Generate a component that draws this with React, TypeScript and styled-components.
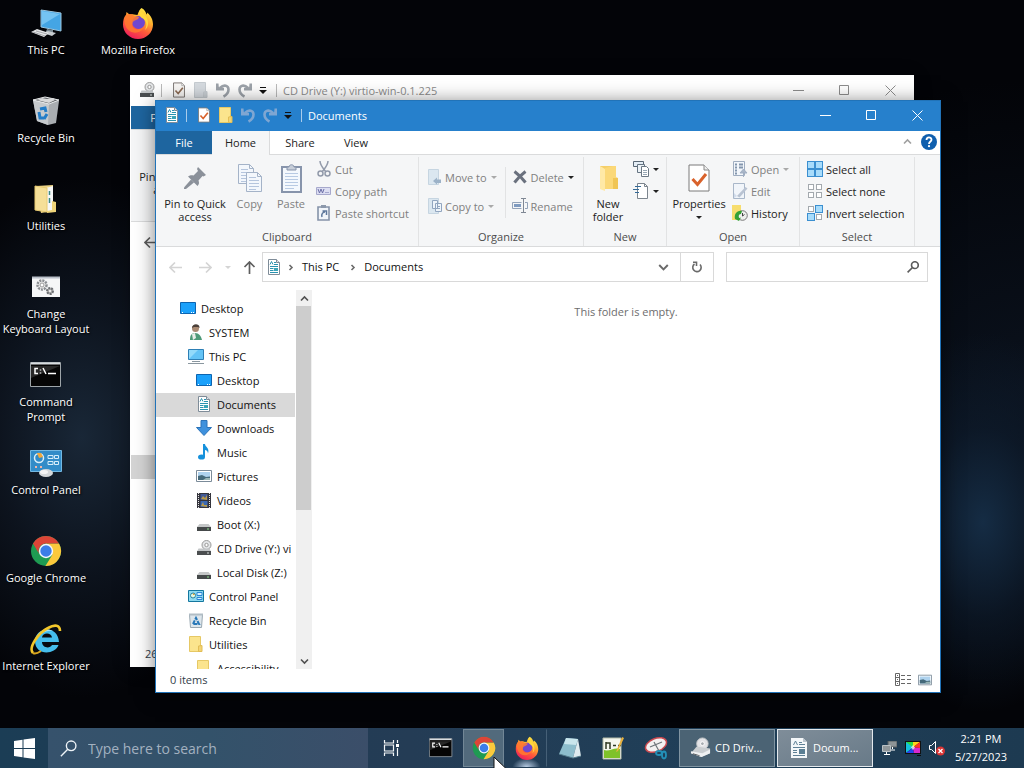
import React from "react";
import styled, { createGlobalStyle } from "styled-components";

const GlobalStyle = createGlobalStyle`
  * { box-sizing: border-box; }
  body { margin: 0; background: #030409; }
  body, button, input {
    font-family: "Open Sans", "Noto Sans", sans-serif;
    font-size: 11px;
  }
  button { border: 0; padding: 0; background: none; color: inherit; }
  svg { display: block; flex: none; }
  ul { list-style: none; margin: 0; padding: 0; }
`;

/* ---------- desktop ---------- */

const Screen = styled.div`
  min-height: 100vh;
  display: flex;
  flex-direction: column;
  background:
    radial-gradient(ellipse 120px 190px at 96% 68%, #152c44 0%, rgba(15, 30, 48, 0.6) 50%, transparent 100%),
    radial-gradient(ellipse 170px 260px at 8% 57%, #192737 0%, rgba(17, 26, 39, 0.7) 50%, transparent 100%),
    radial-gradient(ellipse 400px 380px at 100% 50%, #0a111c 0%, transparent 80%),
    #030408;
`;

const Workspace = styled.main`
  position: relative;
  flex: 1;
  display: flex;
  overflow: hidden;
`;

const ShortcutColumn = styled.ul`
  display: grid;
  grid-auto-rows: 88px;
  align-content: start;
  width: 92px;
`;

const Shortcut = styled.button`
  width: 100%;
  padding-top: 7px;
  display: flex;
  flex-direction: column;
  align-items: center;
  gap: 3px;
  color: #fff;
  line-height: 15px;
  text-align: center;
  text-shadow: 1px 1px 2px #000;
`;

const ShortcutLabel = styled.span`
  width: 92px;
  white-space: pre-line;
`;

/* ---------- explorer windows ---------- */

const Frame = styled.section<{ $active?: boolean }>`
  position: absolute;
  top: ${(p) => (p.$active ? 100 : 75)}px;
  left: ${(p) => (p.$active ? 155 : 130)}px;
  right: ${(p) => (p.$active ? 83 : 110)}px;
  bottom: ${(p) => (p.$active ? 35 : 61)}px;
  display: flex;
  flex-direction: column;
  background: #fff;
  color: #1b1b1b;
  border: 1px solid ${(p) => (p.$active ? "#2173b8" : "#fff")};
  box-shadow: 0 2px 18px rgba(0, 0, 0, ${(p) => (p.$active ? 0.5 : 0.2)});
`;

const TitleBar = styled.header<{ $active?: boolean }>`
  height: 30px;
  flex: none;
  display: flex;
  align-items: center;
  padding: 0 0 2px 8px;
  background: ${(p) => (p.$active ? "#2680cc" : "#fff")};
  color: ${(p) => (p.$active ? "#fff" : "#8c8c8c")};
`;

const QuickBar = styled.div`
  display: flex;
  align-items: center;
`;

const QuickButton = styled.button<{ $narrow?: boolean }>`
  width: ${(p) => (p.$narrow ? 14 : 22)}px;
  height: 20px;
  display: grid;
  place-items: center;
`;

const WindowIcon = styled.span`
  width: 16px;
  display: grid;
  place-items: center;
`;

const Rule = styled.span`
  width: 1px;
  height: 13px;
  margin: 0 6px;
  background: currentColor;
  opacity: 0.6;
`;

const Title = styled.h1`
  flex: 1;
  margin: 0;
  font-size: 11px;
  font-weight: 400;
`;

const Caption = styled.button`
  width: 46px;
  height: 28px;
  display: grid;
  place-items: center;
`;

const Tabs = styled.nav`
  height: 24px;
  flex: none;
  display: flex;
  border-bottom: 1px solid #dadbdc;
`;

const Tab = styled.button<{ $w: number; $kind?: "file" | "open" }>`
  width: ${(p) => p.$w}px;
  height: ${(p) => (p.$kind === "open" ? 24 : 23)}px;
  padding-bottom: ${(p) => (p.$kind === "open" ? 2 : 0)}px;
  color: ${(p) => (p.$kind === "file" ? "#fff" : "#222")};
  background: ${(p) => (p.$kind === "file" ? "#1e659f" : p.$kind === "open" ? "#f5f6f7" : "none")};
  border-right: ${(p) => (p.$kind === "open" ? "1px solid #dadbdc" : "0")};
`;

const TabEnd = styled.div`
  margin-left: auto;
  display: flex;
  align-items: center;
  gap: 9px;
  padding: 0 3px 2px 0;
`;

const Ribbon = styled.div`
  height: 92px;
  flex: none;
  display: flex;
  background: #f5f6f7;
  border-bottom: 1px solid #dadbdc;
`;

const GroupBox = styled.section<{ $w: number }>`
  width: ${(p) => p.$w}px;
  flex: none;
  display: flex;
  flex-direction: column;
  border-right: 1px solid #e2e3e4;
  margin-top: 2px;
`;

const GroupBody = styled.div<{ $pad: number }>`
  flex: 1;
  display: flex;
  padding: 2px 0 0 ${(p) => p.$pad}px;
`;

const GroupName = styled.h2`
  margin: 0;
  height: 17px;
  font-size: 11px;
  font-weight: 400;
  line-height: 15px;
  text-align: center;
  color: #4c4c4c;
`;

const BigButton = styled.button<{ $w: number; $off?: boolean }>`
  width: ${(p) => p.$w}px;
  padding-top: 3px;
  display: flex;
  flex-direction: column;
  align-items: center;
  align-self: flex-start;
  gap: 3px;
  line-height: 13px;
  color: ${(p) => (p.$off ? "#808080" : "#222")};
`;

const IconSlot = styled.span`
  height: 32px;
  display: grid;
  place-items: center;
`;

const Stack = styled.div<{ $loose?: boolean; $left?: number; $ruled?: boolean }>`
  display: flex;
  flex-direction: column;
  align-items: flex-start;
  align-self: flex-start;
  gap: ${(p) => (p.$loose ? 7 : 0)}px;
  margin-top: ${(p) => (p.$loose ? 8 : 0)}px;
  margin-left: ${(p) => p.$left ?? 0}px;
  padding-right: ${(p) => (p.$ruled ? 7 : 0)}px;
  border-right: ${(p) => (p.$ruled ? "1px solid #e2e3e4" : "0")};
`;

const SmallButton = styled.button<{ $off?: boolean }>`
  height: 22px;
  padding-bottom: 2px;
  display: flex;
  align-items: center;
  gap: 3px;
  white-space: nowrap;
  color: ${(p) => (p.$off ? "#808080" : "#222")};
`;

const RibbonIcon = styled.span`
  width: 16px;
  display: grid;
  place-items: center;
`;

const NavRow = styled.div`
  height: 43px;
  flex: none;
  display: flex;
  padding: 5px 12px 8px 4px;
`;

const NavButtons = styled.div`
  display: flex;
  align-items: center;
  color: #d4d4d4;
`;

const NavButton = styled.button<{ $w: number; $on?: boolean }>`
  width: ${(p) => p.$w}px;
  height: 100%;
  display: grid;
  place-items: center;
  color: ${(p) => (p.$on ? "#5e5e5e" : "inherit")};
`;

const Address = styled.div`
  flex: 1;
  display: flex;
  align-items: center;
  border: 1px solid #d9d9d9;
  padding-left: 4px;
`;

const Crumbs = styled.div`
  flex: 1;
  display: flex;
  align-items: center;
  padding-left: 5px;
`;

const Crumb = styled.button`
  margin: 0 9px 0 7px;
  padding-bottom: 2px;
  color: #111;
`;

const AddressTool = styled.button<{ $ruled?: boolean }>`
  width: 33px;
  height: 100%;
  display: grid;
  place-items: center;
  border-left: ${(p) => (p.$ruled ? "1px solid #d9d9d9" : "0")};
`;

const SearchBox = styled.label`
  width: 202px;
  margin-left: 12px;
  display: flex;
  align-items: center;
  border: 1px solid #d9d9d9;
  padding-right: 8px;
`;

const SearchInput = styled.input`
  flex: 1;
  min-width: 0;
  border: 0;
  outline: 0;
  background: none;
`;

const Body = styled.div`
  flex: 1;
  min-height: 0;
  display: flex;
`;

const Tree = styled.ul`
  width: 140px;
  flex: none;
  padding-top: 7px;
  overflow: hidden;
`;

const TreeRow = styled.button<{ $level: number; $selected?: boolean }>`
  width: 139px;
  height: 24px;
  padding: 0 0 2px ${(p) => 24 + p.$level * 8}px;
  display: flex;
  align-items: center;
  gap: 5px;
  white-space: nowrap;
  color: #111;
  background: ${(p) => (p.$selected ? "#d9d9d9" : "none")};
`;

const TreeIcon = styled.span`
  width: 16px;
  flex: none;
  display: grid;
  place-items: center;
`;

const Scrollbar = styled.div`
  width: 16px;
  flex: none;
  display: flex;
  flex-direction: column;
  background: #f0f0f0;
`;

const ScrollButton = styled.button`
  height: 16px;
  display: grid;
  place-items: center;
`;

const Thumb = styled.div`
  flex: 204;
  background: #cdcdcd;
  margin-right: 1px;
`;

const ThumbRest = styled.div`
  flex: 143;
`;

const Content = styled.div`
  flex: 1;
  padding-top: 14px;
  line-height: 15px;
  text-align: center;
  color: #6d6d6d;
`;

const Status = styled.footer`
  height: 23px;
  flex: none;
  display: flex;
  align-items: center;
  gap: 7px;
  padding: 0 8px 2px 14px;
  color: #333d49;
`;

const StatusText = styled.span`
  flex: 1;
`;

const BackBody = styled.div`
  flex: 1;
  padding-top: 190px;
`;

const BackSelection = styled.div`
  width: 139px;
  height: 24px;
  background: #d4d4d4;
`;

/* ---------- taskbar ---------- */

const BarWrap = styled.div`
  position: relative;
`;

const Taskbar = styled.footer`
  height: 40px;
  flex: none;
  display: flex;
  align-items: stretch;
  background: linear-gradient(90deg, #1b3d55, #243c55 40%, #1f3f58 70%, #1d3a51);
  color: #fff;
`;

const Start = styled.button`
  width: 48px;
  display: grid;
  place-items: center;
`;

const TaskSearch = styled.label`
  width: 320px;
  display: flex;
  align-items: center;
  gap: 9px;
  padding-left: 12px;
  background: linear-gradient(90deg, #36526c, #33526a 50%, #3b4e69);
`;

const TaskSearchInput = styled.input`
  flex: 1;
  min-width: 0;
  border: 0;
  outline: 0;
  background: none;
  font-size: 14px;
  &::placeholder { color: #a3b1c0; opacity: 1; }
`;

const Pins = styled.div`
  display: flex;
  padding-right: 2px;
`;

const TaskViewButton = styled.button`
  width: 46px;
  margin-right: 5px;
  display: grid;
  place-items: center;
`;

const Pin = styled.button<{ $hot?: boolean; $running?: boolean }>`
  width: 41px;
  margin: 1px;
  display: grid;
  place-items: center;
  border: 1px solid ${(p) => (p.$hot ? "#728796" : "transparent")};
  border-right-color: ${(p) => (p.$hot ? "#728796" : p.$running ? "#466077" : "transparent")};
  background: ${(p) =>
    p.$hot ? "#526a7c" : p.$running ? "radial-gradient(ellipse 14px 9px at 50% 100%, #b9cde4, transparent) border-box" : "none"};
`;

const Task = styled.button<{ $active?: boolean }>`
  width: 96px;
  margin: 1px 2px 1px 0;
  padding: 0 0 1px 10px;
  display: flex;
  align-items: center;
  gap: 4px;
  text-align: left;
  color: #fff;
  border: 1px solid ${(p) => (p.$active ? "#e4e9ed" : "#8195a2")};
  background: ${(p) => (p.$active ? "linear-gradient(160deg, #7f8d99, #687a88)" : "#4b6374")};
`;

const TaskIcon = styled.span`
  width: 21px;
  display: grid;
  place-items: center;
`;

const Tray = styled.div`
  flex: 1;
  display: flex;
  align-items: center;
  justify-content: space-between;
  padding: 0 17px 0 7px;
`;

const TrayIcons = styled.div`
  display: flex;
  align-items: center;
  gap: 8px;
`;

const Clock = styled.time`
  line-height: 18px;
  text-align: center;
`;

const Pointer = styled.div`
  position: absolute;
  left: 493px;
  bottom: -9px;
`;

/* ---------- icons ---------- */

const DocIcon = ({ w = 14, h = 16 }: { w?: number; h?: number }) => (
  <svg width={w} height={h} viewBox="0 0 14 16">
    <path d="M1.5.5h8l3 3v12h-11z" fill="#fff" stroke="#7f8c98" />
    <path d="M9.500.5v3h3" fill="#dfe6ec" stroke="#7f8c98" />
    <path d="M3 5.500l1.500-3L6 5.500M7 3.500h2M7 5.500h4M3 7.500h8M3 9.500h3.500M3 11.500h3.500M3 13.500h8" stroke="#2a93b0" fill="none" />
    <rect x="7" y="9" width="4" height="3" fill="#3ba5b8" />
  </svg>
);

const TaskDocIcon = () => (
  <svg width="16" height="20" viewBox="0 0 16 20">
    <path d="M0 0h12l4 4v16H0z" fill="#f4f7f9" /><path d="M12 0v4h4z" fill="#b9c4cd" />
    <path d="M2.500 7l2-4 2 4M8 4.500h3M8 6.500h6M2 9.500h12M2 12.500h4M2 14.500h4M2 17.500h12" fill="none" stroke="#5f8196" />
    <path d="M8 11h6v5H8z" fill="#5b7f94" />
  </svg>
);

const CheckDoc = ({ big, dim }: { big?: boolean; dim?: boolean }) => (
  <svg width={big ? 22 : 12} height={big ? 28 : 16} viewBox="0 0 22 28">
    <path d="M1 1h15l5 5v21H1z" fill={dim ? "#f8f6f4" : "#fff"} stroke={dim ? "#716a66" : "#7b7b7b"} strokeWidth={big ? 1 : 1.6} />
    <path d="M16 1v5h5" fill="#eee" stroke="#8a8a8a" />
    <path d="M4.500 15l5 5.500L18 10" fill="none" stroke={dim ? "#8b6a53" : "#d9622b"} strokeWidth="3" />
  </svg>
);

const FolderSmall = ({ dim }: { dim?: boolean }) => (
  <svg width="14" height="16" viewBox="0 0 14 16">
    <path d="M.5.5h11v15H.5z" fill={dim ? "#d6dbe0" : "#fbe48d"} stroke={dim ? "#c6ccd1" : "#e6c865"} />
    <path d="M9.500 15.500V10l3.500-.5v6z" fill={dim ? "#cbd1d6" : "#f3d474"} stroke={dim ? "#c6ccd1" : "#e2bd55"} />
  </svg>
);

const Turn = ({ flip, dim }: { flip?: boolean; dim?: boolean }) => (
  <svg width="16" height="16" viewBox="0 0 16 16">
    <g transform={flip ? "matrix(-1 0 0 1 16 0)" : undefined}>
      <path d="M5 6c4-4 8.500-2.500 8.500 1.500 0 3-2 5.500-5 7" fill="none" stroke={dim ? "#9da3aa" : "#7fa6d2"} strokeWidth="2.600" />
      <path d="M1 1.500h2.500l.3 3.500L9 6v2.500H1z" fill={dim ? "#9da3aa" : "#7fa6d2"} />
    </g>
  </svg>
);

const Caret = ({ color = "#222", bar }: { color?: string; bar?: boolean }) => (
  <svg width="8" height="8" viewBox="0 0 8 8">
    {bar && <path d="M1 1.500h6" stroke={color} />}
    <path d={bar ? "M0 4h8L4 8z" : "M1 3h6L4 6z"} fill={color} />
  </svg>
);

const CdDrive = () => (
  <svg width="16" height="16" viewBox="0 0 16 16">
    <circle cx="10.500" cy="5" r="4.500" fill="#e4e6e8" stroke="#9a9a9a" />
    <circle cx="10.500" cy="5" r="1.700" fill="#fff" stroke="#999" />
    <path d="M2.500 8.500h11l1.500 3H1z" fill="#c3c6c8" />
    <path d="M1 11h14v4H1z" fill="#4b4e50" />
    <path d="M11 13h2" stroke="#d8dedc" />
  </svg>
);

const CdTask = () => (
  <svg width="21" height="21" viewBox="0 0 22 22">
    <circle cx="13" cy="7" r="6" fill="#e3e3e6" stroke="#c4c7ca" />
    <circle cx="13" cy="7" r="2" fill="#a9adb2" stroke="#fff" />
    <path d="M7 10l14 2v5l-9 4-11-4z" fill="#c9cdd0" />
    <path d="M1 15l12 2 8-4v4l-9 4-11-4z" fill="#eff1f2" />
    <path d="M3 17l7 2v1l-7-2z" fill="#4c5053" />
  </svg>
);

const Disk = () => (
  <svg width="16" height="16" viewBox="0 0 16 16">
    <path d="M3.500 8h9l2.500 3H1z" fill="#c5c7c8" />
    <path d="M1 11h14v4H1z" fill="#45494a" />
    <path d="M11 13h2" stroke="#8ee08c" />
  </svg>
);

const CaptionGlyph = ({ kind }: { kind: "min" | "max" | "close" }) => (
  <svg width="11" height="11" viewBox="0 0 11 11" fill="none" stroke="currentColor">
    {kind === "min" && <path d="M0 5.500h11" />}
    {kind === "max" && <path d="M.5.5h9v9H.5z" />}
    {kind === "close" && <path d="M.5.5l10 10M10.500.5l-10 10" />}
  </svg>
);

const PinIcon = () => (
  <svg width="22" height="22" viewBox="0 0 22 22" fill="#8b919a">
    <path d="M14 0l8 8-2.500 1.500-1-.5-4 4.500c1 2.500.5 4-1 5.500L4 9.500C6 8 8 8 9.500 8.500L14 4l-1-2z" />
    <path d="M7 12.500l3 3L2 22H0v-1.500z" />
  </svg>
);

const Sheet = ({ x, y }: { x: number; y: number }) => (
  <g transform={`translate(${x} ${y})`}>
    <path d="M.5.5h11l4 4v15H.5z" fill="#f3f7fc" stroke="#a4b3c8" />
    <path d="M11.500.5v4h4" fill="none" stroke="#a4b3c8" />
    <path d="M3 5.500h7M3 8.500h10M3 11.500h10M3 14.500h10M3 17.500h7" stroke="#b5c5dd" />
  </g>
);

const CopyIcon = () => (
  <svg width="24" height="28" viewBox="0 0 24 28"><Sheet x={0} y={0} /><Sheet x={8} y={8} /></svg>
);

const PasteIcon = () => (
  <svg width="21" height="29" viewBox="0 0 21 29">
    <rect x="1" y="3" width="19" height="25" fill="#f4f8fd" stroke="#8794ab" strokeWidth="2" />
    <path d="M6 6V3h2c0-3 5-3 5 0h2v3z" fill="#c7ced9" stroke="#8794ab" />
    <path d="M4 9.500h13M4 12.500h13M4 15.500h13M4 18.500h13M4 21.500h13M4 24.500h9" stroke="#b8cae3" />
  </svg>
);

const CutIcon = () => (
  <svg width="16" height="16" viewBox="0 0 16 16" fill="none" stroke="#929aaa" strokeWidth="1.500">
    <path d="M4 0c0 4 2 6 6 11M12 0c0 4-2 6-6 11" />
    <circle cx="4.500" cy="12.500" r="2.500" /><circle cx="11.500" cy="12.500" r="2.500" />
  </svg>
);

const PathIcon = () => (
  <svg width="16" height="16" viewBox="0 0 16 16">
    <path d="M.5 4.500h14v7H.5z" fill="#dcdef2" stroke="#a7a9cc" />
    <path d="M2 6l1.500 4L5 6l1.500 4L8 6M9.500 9.500h1M11.500 9.500h1" fill="none" stroke="#6d70a8" />
  </svg>
);

const ShortcutIcon = () => (
  <svg width="16" height="16" viewBox="0 0 16 16">
    <path d="M2 2h11v13H2z" fill="#f1f5fa" stroke="#8593a9" strokeWidth="1.600" />
    <path d="M5 0h5v3H5z" fill="#8b98ab" />
    <path d="M6 12c-1-3 1-5 3-5M6.500 6h4v4" fill="none" stroke="#5d779c" strokeWidth="1.500" />
  </svg>
);

const MoveIcon = ({ copy }: { copy?: boolean }) => (
  <svg width="14" height="16" viewBox="0 0 14 16">
    <path d="M.5.5h10v15H.5z" fill="#dbe7f0" stroke="#c6d5e1" />
    {copy
      ? <path d="M4.500 2.500h5v8h-5zM7.500 5.500h6v8h-6zM9 8.500h3M9 10.500h3" fill="#eef4fa" stroke="#91a5bf" />
      : <path d="M5 12l4-3.500v2h4V14H9v1.500z" fill="#9cb2c8" />}
  </svg>
);

const DeleteIcon = () => (
  <svg width="14" height="14" viewBox="0 0 14 14"><path d="M1.500 1.500c4 3 8 7 11 11M12.500 1.500c-4 3-8 7-11 11" stroke="#6a717e" strokeWidth="3" /></svg>
);

const RenameIcon = () => (
  <svg width="16" height="16" viewBox="0 0 16 16" fill="none" stroke="#93a3b9">
    <path d="M9.500 4.500h-9v6h9M13 4.500h2.500v6H13" /><path d="M2 7.500h7" stroke="#7f9bc0" strokeWidth="3" />
    <path d="M9 .5h5M11.500.5v14M9 14.500h5" stroke="#7f8794" />
  </svg>
);

const FolderBig = () => (
  <svg width="19" height="28" viewBox="0 0 19 28">
    <path d="M1 2h16v23H1z" fill="#f5cf69" /><path d="M1 2l5 3v22l-5-2z" fill="#ffe9a6" />
    <path d="M6 4l8-2h3v11l2 1v11H6z" fill="#fbd878" /><path d="M14 14h5v11h-5z" fill="#f0c555" />
  </svg>
);

const NewItemIcon = () => (
  <svg width="16" height="16" viewBox="0 0 16 16">
    <path d="M.5.5h10v5H.5z" fill="#e4edf5" stroke="#596775" />
    <path d="M4.500 3.500h7v8h-7z" fill="#edf3f7" stroke="#667482" />
    <path d="M8.500 5.500h5l2 2v8h-7z" fill="#fff" stroke="#6c7884" /><path d="M10 9.500h4M10 11.500h4M10 13.500h4" stroke="#98a7b4" />
  </svg>
);

const EasyIcon = () => (
  <svg width="16" height="16" viewBox="0 0 16 16">
    <path d="M4.500.5h7l3 3v12h-10z" fill="#fff" stroke="#7c858e" /><path d="M11.500.5v3h3" fill="none" stroke="#7c858e" />
    <path d="M2 3.500h6M0 6.500h6M2 9.500h4" stroke="#356b98" />
  </svg>
);

const OpenIcon = () => (
  <svg width="16" height="16" viewBox="0 0 16 16">
    <path d="M1.500.5h11v14h-11z" fill="#f2f6fb" stroke="#9fadc0" />
    <path d="M3 3.500h2M7 3.500h4M3 6.500h2M7 6.500h4M3 9.500h2M3 12.500h2" stroke="#8396ad" strokeWidth="2" />
    <path d="M11.500 16v-5M8 12l3.500-4 3.500 4z" fill="#a9b6c8" stroke="#a1afc3" />
  </svg>
);

const EditIcon = () => (
  <svg width="16" height="16" viewBox="0 0 16 16">
    <path d="M1.500.5h11v15h-11z" fill="#f1f5fa" stroke="#a9b7c9" /><path d="M5 13l8.500-9 2 1.500-8 9z" fill="#b9c3d2" /><path d="M2 10l3 3-3 2z" fill="#d1dceb" />
  </svg>
);

const HistoryIcon = () => (
  <svg width="16" height="16" viewBox="0 0 16 16">
    <path d="M0 0h9v15H0z" fill="#f7dd6e" />
    <circle cx="10.500" cy="10.500" r="4.800" fill="#eef0ee" stroke="#777" />
    <path d="M10.500 8v3l2-1.500" fill="none" stroke="#444" />
    <path d="M3 14c-1-5 2-9 7-8l-1 3c-2 0-3 2-2 4l2-.5-2 3.500z" fill="#35a136" />
  </svg>
);

const SelectIcon = ({ mode }: { mode: "all" | "none" | "invert" }) => {
  const cells = [[0, 0], [8, 0], [0, 8], [8, 8]];
  return (
    <svg width="16" height="16" viewBox="0 0 16 16">
      {cells.map(([x, y], i) => {
        const on = mode === "all" || (mode === "invert" && (i === 1 || i === 2));
        return on
          ? <rect key={i} x={x + 0.5} y={y + 0.5} width="7" height="7" fill="#a8dcfb" stroke="#3b8fd0" />
          : <rect key={i} x={x + 1.5} y={y + 1.5} width="5" height="5" fill="#fff" stroke="#a3a9ae" />;
      })}
    </svg>
  );
};

const Arrow = ({ dir }: { dir: "left" | "right" | "up" }) => (
  <svg width="13" height="13" viewBox="0 0 13 13" fill="none" stroke="currentColor" strokeWidth="1.700">
    {dir === "left" && <path d="M13 6.500H1M6 1.500l-5 5 5 5" />}
    {dir === "right" && <path d="M0 6.500h12M7 1.500l5 5-5 5" />}
    {dir === "up" && <path d="M6.500 13V1M1.500 6l5-5 5 5" />}
  </svg>
);

const Angle = ({ dir, color = "#6a6a6a", size = 9 }: { dir: "up" | "down" | "right"; color?: string; size?: number }) => (
  <svg width={size} height={size} viewBox="0 0 9 9" fill="none" stroke={color} strokeWidth="1.600">
    {dir === "up" && <path d="M1 6.500L4.500 3 8 6.500" />}
    {dir === "down" && <path d="M1 2.500L4.500 6 8 2.500" />}
    {dir === "right" && <path d="M3.500 2L6 4.500 3.500 7" />}
  </svg>
);

const RefreshIcon = () => (
  <svg width="12" height="12" viewBox="0 0 12 12" fill="none" stroke="#6a6a6a" strokeWidth="1.600">
    <path d="M3.500 3a4.200 4.200 0 1 0 5.500.5" /><path d="M2 1.200h3.500V5" />
  </svg>
);

const Lens = ({ size, color, width }: { size: number; color: string; width: number }) => (
  <svg width={size} height={size} viewBox="0 0 16 16" fill="none" stroke={color} strokeWidth={width}>
    <circle cx="10.500" cy="5.500" r="4.500" /><path d="M7.300 8.700L.8 15.200" />
  </svg>
);

const HelpIcon = () => (
  <svg width="16" height="16" viewBox="0 0 16 16">
    <circle cx="8" cy="8" r="8" fill="#0f5fae" />
    <path d="M5.500 6c0-3.500 5-3.300 5-.3C10.500 7.500 8 7.500 8 10" fill="none" stroke="#fff" strokeWidth="1.800" />
    <circle cx="8" cy="12.200" r="1.100" fill="#fff" />
  </svg>
);

const DesktopIcon = () => (
  <svg width="16" height="16" viewBox="0 0 16 16">
    <path d="M.5 2.500h15v11H.5z" fill="#1ba1fb" stroke="#0d64b0" /><path d="M2 12.500h1M11 12.500h1M13 12.500h1" stroke="#fff" />
  </svg>
);

const UserIcon = () => (
  <svg width="16" height="16" viewBox="0 0 16 16">
    <path d="M2 16c0-4 1-7 5-7s6 3 7 7z" fill="#4e9a78" /><path d="M4 10l3-1 1 5-3 2z" fill="#e9eee9" />
    <circle cx="7.500" cy="4.500" r="3.500" fill="#a98a72" /><path d="M4 4c0-5 8-5 7.500 0L10 3H6z" fill="#4b4039" />
  </svg>
);

const PcIcon = () => (
  <svg width="16" height="16" viewBox="0 0 16 16">
    <path d="M.5 1.500h15v10H.5z" fill="#63c3f6" stroke="#2d7fb5" /><path d="M1 11V2h9z" fill="#93dafa" />
    <path d="M4 13.500h8M0 15.500h16" stroke="#8a979f" />
  </svg>
);

const DownIcon = () => (
  <svg width="16" height="16" viewBox="0 0 16 16"><path d="M5 .5h6v7h4.500L8 15.500.5 7.500H5z" fill="#3e91dd" stroke="#2b73b9" /></svg>
);

const MusicIcon = () => (
  <svg width="16" height="16" viewBox="0 0 16 16">
    <ellipse cx="5.500" cy="13" rx="3.500" ry="2.600" fill="#1691dc" />
    <path d="M7 0h2c0 3 5 4 3 9.500C12 7 10 6 9 6v7H7z" fill="#1691dc" />
  </svg>
);

const PictureIcon = ({ w = 16, h = 16 }: { w?: number; h?: number }) => (
  <svg width={w} height={h} viewBox="0 0 16 16">
    <path d="M.5 2.500h15v11H.5z" fill="#fff" stroke="#7b8b99" /><path d="M2 4h12v8H2z" fill="#aed2ee" />
    <path d="M2 8l4-1 4 2 4-.5V12H2z" fill="#44697a" /><path d="M7 12l3-2 4 0v2z" fill="#9bb6b6" />
  </svg>
);

const VideoIcon = () => (
  <svg width="16" height="16" viewBox="0 0 16 16">
    <path d="M1 1h14v15H1z" fill="#34343c" />
    <path d="M2.500 1v15M13.500 1v15" stroke="#e7e7e7" strokeDasharray="1 1" />
    <path d="M4.500 2h7v6h-7z" fill="#425a96" /><path d="M4.500 9h7v6h-7z" fill="#3b69b3" />
    <path d="M5 7l2-3 2 2 2-3v5zM5 14l2-4 1 3h3v2z" fill="#b99a4b" />
  </svg>
);

const PanelIcon = () => (
  <svg width="16" height="16" viewBox="0 0 16 16">
    <path d="M.5 2.500h15v11H.5z" fill="#8edaf0" stroke="#14779f" />
    <circle cx="5" cy="7.500" r="2.500" fill="#e5f7de" stroke="#2783a4" /><path d="M9 4.500h5v3H9zM9 9.500h5v2H9z" fill="#d4f0ff" stroke="#2c86d5" />
    <path d="M5 7V5l2 2z" fill="#e69b28" />
  </svg>
);

const BinSmall = () => (
  <svg width="16" height="16" viewBox="0 0 16 16">
    <path d="M1.500 2.500h13l-1 13h-11z" fill="#dde6ec" stroke="#9ba9b2" /><path d="M1 2.500h14" stroke="#b1bdc5" strokeWidth="2" />
    <path d="M5 12l3-6 3 6z" fill="none" stroke="#2878b8" strokeWidth="2" strokeDasharray="4 1" />
  </svg>
);

const BigPc = () => (
  <svg width="32" height="32" viewBox="0 0 32 32">
    <path d="M11 3l20 3v18l-20-4z" fill="#44a5e4" stroke="#9cc6df" /><path d="M12 4l18 3-18 11z" fill="#74c3f2" />
    <path d="M17 22l6 1v4h-8z" fill="#7a8992" /><path d="M13 26l5-2 8 2-4 3z" fill="#c7ccd0" />
    <path d="M1 25l6-3 12 4-5 4z" fill="#e4e5e7" /><path d="M3 25l12 4M6 24l11 3" stroke="#a6a9ad" />
  </svg>
);

const BigBin = () => (
  <svg width="32" height="32" viewBox="0 0 32 32">
    <path d="M3 5l20-2 6 3-3 22-8 2-11-4z" fill="#a9adb1" /><path d="M3 5l16 3-1 22-11-4z" fill="#c6cacd" />
    <path d="M3 5l12-3 14 3-10 4z" fill="#5d6165" stroke="#eceeef" /><path d="M7 5l5-2 5 1 5-1 3 2-6 3z" fill="#d9dadb" />
    <path d="M10 14l5-1 1 4M17 19l-3 5M9 17l1 6 4 0" fill="none" stroke="#237dc8" strokeWidth="3" />
  </svg>
);

const BigUtilities = () => (
  <svg width="32" height="32" viewBox="0 0 32 32">
    <path d="M6 3l17-1v26l-12 2z" fill="#ecd386" /><path d="M16 5l7-2v24l-7 2z" fill="#f6f7f7" />
    <path d="M19.500 8v4M19.500 15v5" stroke="#3d8b83" strokeWidth="1.500" />
    <path d="M5 3l12 2v24L5 27z" fill="#f5df98" stroke="#e8ca71" /><path d="M22 18l4 1v10l-9 1v-2l5-1z" fill="#efd47a" />
  </svg>
);

const BigGears = () => (
  <svg width="32" height="32" viewBox="0 0 32 32">
    <path d="M2 6h28v20H2z" fill="#f5f6f7" /><path d="M2 6.500h28" stroke="#b9bfc8" strokeWidth="2" />
    <circle cx="12" cy="14" r="4.500" fill="#eee" stroke="#8b8e92" strokeWidth="2.500" strokeDasharray="2 1" /><circle cx="12" cy="14" r="2" fill="#fff" stroke="#999" />
    <circle cx="20" cy="20" r="3" fill="#aaa" stroke="#6b6e72" strokeWidth="2" strokeDasharray="2 1" /><circle cx="20" cy="20" r="1" fill="#fff" />
  </svg>
);

const Cmd = ({ w }: { w: number }) => (
  <svg width={w} height={w} viewBox="0 0 32 32">
    <path d="M.5 3.500h30v24H.5z" fill="#050505" stroke="#9ea5a9" /><path d="M1 4.500h29" stroke="#d8dde0" strokeWidth="2" />
    <path d="M1 7h29L1 19z" fill="#282828" />
    <path d="M8 9.500H5v5h3M10.500 10.500v1M10.500 13.500v1M13 9l3 6M18 14.500h8" fill="none" stroke="#fff" strokeWidth="1.500" />
  </svg>
);

const BigPanel = () => (
  <svg width="32" height="32" viewBox="0 0 32 32">
    <path d="M.5 3.500h31v21H.5z" fill="#328cc8" stroke="#73b8e2" />
    <circle cx="9" cy="11" r="4.500" fill="none" stroke="#d9eef9" strokeWidth="1.500" /><path d="M9 11l-2-5h4l2 4z" fill="#f2a93b" />
    <path d="M18 8.500h5v3h-5zM24.500 8.500h4v3h-4zM18 14.500h5v3h-5zM24.500 14.500h4v3h-4z" fill="none" stroke="#d5edfa" />
    <path d="M5 20h2M10 20h2" stroke="#f3b5a6" strokeWidth="2" />
    <ellipse cx="16" cy="26" rx="7" ry="4" fill="#d5d8da" /><ellipse cx="14" cy="25" rx="4" ry="2" fill="#f4f4f4" />
  </svg>
);

const Chrome = ({ w }: { w: number }) => (
  <svg width={w} height={w} viewBox="0 0 32 32">
    <circle cx="16" cy="16" r="15" fill="#1e9b52" />
    <path d="M16 8.500h13A15 15 0 0 1 15.400 31l7-11.200z" fill="#fbc93c" />
    <path d="M3 8.500A15 15 0 0 1 29 8.500H16a7.500 7.500 0 0 0-6.800 10.500z" fill="#dd4537" />
    <circle cx="16" cy="16" r="7.200" fill="#f4f7fc" /><circle cx="16" cy="16" r="5.700" fill="#3b7de8" />
  </svg>
);

const Firefox = ({ w, id }: { w: number; id: string }) => (
  <svg width={w} height={w} viewBox="0 0 32 32">
    <defs>
      <linearGradient id={id} x1=".8" y1="0" x2=".3" y2="1">
        <stop offset="0" stopColor="#fff24a" /><stop offset=".35" stopColor="#ffb02e" />
        <stop offset=".65" stopColor="#ff5b3a" /><stop offset="1" stopColor="#ee1c5d" />
      </linearGradient>
    </defs>
    <path d="M19.500 1c3 1.500 4.500 4.500 5 6.500 1-.5.500-2 .5-2 4.500 3.500 6 8 6 12a15 14.500 0 0 1-30 0C1 13 2 10 4 8l.5-3 3 2.500c1.500-.5 3-.5 4.500 0L15.500 8c1-3 2-5.500 4-7z" fill={`url(#${id})`} />
    <circle cx="16.500" cy="15.500" r="6.500" fill="#7047cf" />
    <path d="M3 9c4-3 8-2 9 0l5 1c0 2-3 3-5 4-2 1-1 3-2 4 1 5 7 6 12 2-2 6-13 9-18 0-2-4-2-8-1-11z" fill="#ff7a2f" opacity=".85" />
    <path d="M18 3c3 4 8 6 8 13 0 3-1 5-3 7 3-6 1-10-3-12-3-2-3-6-2-8z" fill="#ffd83d" />
  </svg>
);

const Explorer = () => (
  <svg width="32" height="32" viewBox="0 0 32 32">
    <path d="M29 19H12c0 6 8 7 10 3h6.500C25 32 5 33 5 18 5 4 28 1 29 19zM12 14.500h10c-.5-5.500-9.500-5.500-10 0z" fill="#45bdec" fillRule="evenodd" />
    <path d="M6 17C7 8 17 4 23 8c-7-1-14 3-17 9z" fill="#a5e5fb" />
    <path d="M3 30c-5-5 5-20 15-25 7-4 12-3 12 3" fill="none" stroke="#f2c62b" strokeWidth="2.600" />
    <path d="M3 30c2 1 5 0 8-2" fill="none" stroke="#d8a51f" strokeWidth="2" />
  </svg>
);

const WinLogo = () => (
  <svg width="21" height="21" viewBox="0 0 21 21" fill="#fff">
    <path d="M0 3l8.500-1.200V10H0zM9.500 1.600L21 0v10H9.500zM0 11h8.500v8.200L0 18zM9.500 11H21v10L9.500 19.400z" />
  </svg>
);

const TaskView = () => (
  <svg width="17" height="16" viewBox="0 0 17 16" fill="none" stroke="#f3f6f8" strokeWidth="1.200">
    <path d="M1.500 0v3h9V0M1.500 5h9v6h-9zM1.500 16v-3h9v3M14.500 0v3M14.500 8v8" /><path d="M13 4h3v3h-3z" fill="#fff" stroke="none" />
  </svg>
);

const Notebook = () => (
  <svg width="24" height="24" viewBox="0 0 24 24">
    <path d="M8 2l12 1-5 19-14-4z" fill="#8dbdcc" /><path d="M8 2l12 1-2 6-12-1z" fill="#c9e5ec" />
    <path d="M20 3l3 17-8 2z" fill="#dfebef" /><path d="M1 18l14 4 8-2" fill="none" stroke="#557d8d" />
  </svg>
);

const NotepadPlus = () => (
  <svg width="24" height="24" viewBox="0 0 24 24">
    <path d="M2 2h18v21H2z" fill="#f4f6ee" stroke="#b4bba8" /><path d="M3 14c5 2 10-3 16-1v9H3z" fill="#7fc229" />
    <path d="M5 6v7M5 7h4v6M12 9.500h3M17 9.500h3" fill="none" stroke="#2f3a24" strokeWidth="1.500" />
    <path d="M21 1l2 1-6 13-2 1z" fill="#e9b23f" />
  </svg>
);

const Snip = () => (
  <svg width="24" height="24" viewBox="0 0 24 24">
    <ellipse cx="12" cy="9" rx="11" ry="6.500" transform="rotate(-22 12 9)" fill="#f3f0f1" stroke="#cb4a50" strokeWidth="1.500" />
    <path d="M6 11l12-5M10 6l5 9" stroke="#6d7378" strokeWidth="1.200" />
    <ellipse cx="15" cy="17" rx="3" ry="2" fill="none" stroke="#2390b8" strokeWidth="1.800" /><ellipse cx="20" cy="19" rx="2" ry="3.500" fill="none" stroke="#2390b8" strokeWidth="1.800" />
  </svg>
);

const Network = () => (
  <svg width="15" height="14" viewBox="0 0 15 14">
    <path d="M6 0h9v6H6z" fill="#8d9497" stroke="#555c60" /><path d="M10.500 6v2M8 9h5" stroke="#fff" />
    <path d="M.5 4.500h8v6h-8z" fill="#8f9699" stroke="#b9c0c4" /><path d="M4.500 11v2M2 13.500h6" stroke="#fff" />
  </svg>
);

const Rainbow = () => (
  <svg width="16" height="16" viewBox="0 0 16 16">
    <path d="M0 1h16v13H0z" fill="#111" /><path d="M1 2h7v5.500H1z" fill="#2bd844" /><path d="M8 2h7L8 7.500z" fill="#ffd31a" />
    <path d="M15 2v6L8 7.500z" fill="#ff3425" /><path d="M1 2v11l7-5.500z" fill="#15c1dc" /><path d="M1 13h8L8 7.500z" fill="#2645ee" />
    <path d="M9 13h6V8L8 7.500z" fill="#d928cf" /><path d="M8 5l2 2.500L8 10 6 7.500z" fill="#fff" opacity=".7" /><path d="M12 15.500h4" stroke="#0b0b0b" />
  </svg>
);

const Muted = () => (
  <svg width="16" height="16" viewBox="0 0 16 16">
    <path d="M.5 5.500h2l4-4v12l-4-4h-2z" fill="none" stroke="#fff" />
    <circle cx="11.500" cy="11" r="4.500" fill="#d93434" /><path d="M9.500 9l4 4M13.500 9l-4 4" stroke="#fff" strokeWidth="1.300" />
  </svg>
);

const DetailsIcon = () => (
  <svg width="16" height="13" viewBox="0 0 16 13" fill="none" stroke="#676767">
    <path d="M.5.5h4v12h-4zM.5 4.500h4M.5 8.500h4M6 2.500h4M12 2.500h4M6 6.500h4M12 6.500h4M6 10.500h4M12 10.500h4M2 2.500h1M2 6.500h1M2 10.500h1" />
  </svg>
);

const CursorIcon = () => (
  <svg width="14" height="20" viewBox="0 0 14 20"><path d="M1 0v17l4-4 3 6.500 2.500-1.500L8 12h5.500z" fill="#fff" stroke="#111" /></svg>
);

/* ---------- pieces ---------- */

const CaptionButtons = () => (
  <>
    <Caption aria-label="Minimize"><CaptionGlyph kind="min" /></Caption>
    <Caption aria-label="Maximize"><CaptionGlyph kind="max" /></Caption>
    <Caption aria-label="Close"><CaptionGlyph kind="close" /></Caption>
  </>
);

const QuickAccess = ({ icon, dim }: { icon: React.ReactNode; dim?: boolean }) => (
  <QuickBar>
    <WindowIcon>{icon}</WindowIcon>
    <Rule />
    <QuickButton aria-label="Properties"><CheckDoc dim={dim} /></QuickButton>
    <QuickButton aria-label="New folder"><FolderSmall dim={dim} /></QuickButton>
    <QuickButton aria-label="Undo"><Turn dim={dim} /></QuickButton>
    <QuickButton aria-label="Redo"><Turn flip dim={dim} /></QuickButton>
    <QuickButton $narrow aria-label="Customize"><Caret bar color="#111" /></QuickButton>
    <Rule />
  </QuickBar>
);

const shortcuts = [
  { label: "This PC", icon: <BigPc /> },
  { label: "Recycle Bin", icon: <BigBin /> },
  { label: "Utilities", icon: <BigUtilities /> },
  { label: "Change\nKeyboard Layout", icon: <BigGears /> },
  { label: "Command\nPrompt", icon: <Cmd w={32} /> },
  { label: "Control Panel", icon: <BigPanel /> },
  { label: "Google Chrome", icon: <Chrome w={32} /> },
  { label: "Internet Explorer", icon: <Explorer /> },
];

const places = [
  { label: "Desktop", level: 0, icon: <DesktopIcon /> },
  { label: "SYSTEM", level: 1, icon: <UserIcon /> },
  { label: "This PC", level: 1, icon: <PcIcon /> },
  { label: "Desktop", level: 2, icon: <DesktopIcon /> },
  { label: "Documents", level: 2, icon: <DocIcon />, selected: true },
  { label: "Downloads", level: 2, icon: <DownIcon /> },
  { label: "Music", level: 2, icon: <MusicIcon /> },
  { label: "Pictures", level: 2, icon: <PictureIcon /> },
  { label: "Videos", level: 2, icon: <VideoIcon /> },
  { label: "Boot (X:)", level: 2, icon: <Disk /> },
  { label: "CD Drive (Y:) vi", level: 2, icon: <CdDrive /> },
  { label: "Local Disk (Z:)", level: 2, icon: <Disk /> },
  { label: "Control Panel", level: 1, icon: <PanelIcon /> },
  { label: "Recycle Bin", level: 1, icon: <BinSmall /> },
  { label: "Utilities", level: 1, icon: <FolderSmall /> },
  { label: "Accessibility", level: 2, icon: <FolderSmall /> },
];

const Group = ({ name, w, pad, children }: { name: string; w: number; pad: number; children: React.ReactNode }) => (
  <GroupBox $w={w}>
    <GroupBody $pad={pad}>{children}</GroupBody>
    <GroupName>{name}</GroupName>
  </GroupBox>
);

const PinButton = () => (
  <BigButton $w={68}><IconSlot><PinIcon /></IconSlot><span>Pin to Quick<br />access</span></BigButton>
);

const CdWindow = () => (
  <Frame aria-label="CD Drive">
    <TitleBar>
      <QuickAccess icon={<CdDrive />} dim />
      <Title>CD Drive (Y:) virtio-win-0.1.225</Title>
      <CaptionButtons />
    </TitleBar>
    <Tabs><Tab $w={56} $kind="file">File</Tab></Tabs>
    <Ribbon><GroupBody $pad={5}><PinButton /></GroupBody></Ribbon>
    <NavRow><NavButtons><NavButton $w={30} $on aria-label="Back"><Arrow dir="left" /></NavButton></NavButtons></NavRow>
    <BackBody><BackSelection /></BackBody>
    <Status><StatusText>26 items</StatusText></Status>
  </Frame>
);

const DocumentsWindow = () => (
  <Frame $active aria-label="Documents">
    <TitleBar $active>
      <QuickAccess icon={<DocIcon />} />
      <Title>Documents</Title>
      <CaptionButtons />
    </TitleBar>
    <Tabs>
      <Tab $w={56} $kind="file">File</Tab>
      <Tab $w={58} $kind="open">Home</Tab>
      <Tab $w={60}>Share</Tab>
      <Tab $w={52}>View</Tab>
      <TabEnd>
        <button aria-label="Collapse ribbon"><Angle dir="up" color="#a0a0a0" /></button>
        <button aria-label="Help"><HelpIcon /></button>
      </TabEnd>
    </Tabs>
    <Ribbon>
      <Group name="Clipboard" w={263} pad={5}>
        <PinButton />
        <BigButton $w={41} $off><IconSlot><CopyIcon /></IconSlot>Copy</BigButton>
        <BigButton $w={42} $off><IconSlot><PasteIcon /></IconSlot>Paste</BigButton>
        <Stack $left={4}>
          <SmallButton $off><CutIcon />Cut</SmallButton>
          <SmallButton $off><PathIcon />Copy path</SmallButton>
          <SmallButton $off><ShortcutIcon />Paste shortcut</SmallButton>
        </Stack>
      </Group>
      <Group name="Organize" w={165} pad={9}>
        <Stack $loose $ruled>
          <SmallButton $off><MoveIcon />Move to<Caret color="#a9a9a9" /></SmallButton>
          <SmallButton $off><MoveIcon copy />Copy to<Caret color="#a9a9a9" /></SmallButton>
        </Stack>
        <Stack $loose $left={6}>
          <SmallButton $off><RibbonIcon><DeleteIcon /></RibbonIcon>Delete<Caret /></SmallButton>
          <SmallButton $off><RenameIcon />Rename</SmallButton>
        </Stack>
      </Group>
      <Group name="New" w={83} pad={3}>
        <BigButton $w={42}><IconSlot><FolderBig /></IconSlot><span>New<br />folder</span></BigButton>
        <Stack $left={4}>
          <SmallButton aria-label="New item"><NewItemIcon /><Caret /></SmallButton>
          <SmallButton aria-label="Easy access"><EasyIcon /><Caret /></SmallButton>
        </Stack>
      </Group>
      <Group name="Open" w={133} pad={3}>
        <BigButton $w={58}><IconSlot><CheckDoc big /></IconSlot>Properties<Caret /></BigButton>
        <Stack $left={4}>
          <SmallButton $off><OpenIcon />Open<Caret color="#a9a9a9" /></SmallButton>
          <SmallButton $off><EditIcon />Edit</SmallButton>
          <SmallButton><HistoryIcon />History</SmallButton>
        </Stack>
      </Group>
      <Group name="Select" w={115} pad={7}>
        <Stack>
          <SmallButton><SelectIcon mode="all" />Select all</SmallButton>
          <SmallButton><SelectIcon mode="none" />Select none</SmallButton>
          <SmallButton><SelectIcon mode="invert" />Invert selection</SmallButton>
        </Stack>
      </Group>
    </Ribbon>
    <NavRow>
      <NavButtons>
        <NavButton $w={30} aria-label="Back"><Arrow dir="left" /></NavButton>
        <NavButton $w={30} aria-label="Forward"><Arrow dir="right" /></NavButton>
        <NavButton $w={16} aria-label="Recent"><Caret color="#d4d4d4" /></NavButton>
        <NavButton $w={26} $on aria-label="Up"><Arrow dir="up" /></NavButton>
      </NavButtons>
      <Address>
        <DocIcon />
        <Crumbs>
          <Angle dir="right" />
          <Crumb>This PC</Crumb>
          <Angle dir="right" />
          <Crumb>Documents</Crumb>
        </Crumbs>
        <AddressTool aria-label="Previous locations"><Angle dir="down" size={11} /></AddressTool>
        <AddressTool $ruled aria-label="Refresh"><RefreshIcon /></AddressTool>
      </Address>
      <SearchBox>
        <SearchInput aria-label="Search Documents" />
        <Lens size={12} color="#5c5c5c" width={2.2} />
      </SearchBox>
    </NavRow>
    <Body>
      <Tree>
        {places.map((p, i) => (
          <li key={i}>
            <TreeRow $level={p.level} $selected={p.selected}><TreeIcon>{p.icon}</TreeIcon>{p.label}</TreeRow>
          </li>
        ))}
      </Tree>
      <Scrollbar>
        <ScrollButton aria-label="Scroll up"><Angle dir="up" color="#505050" /></ScrollButton>
        <Thumb />
        <ThumbRest />
        <ScrollButton aria-label="Scroll down"><Angle dir="down" color="#505050" /></ScrollButton>
      </Scrollbar>
      <Content>This folder is empty.</Content>
    </Body>
    <Status>
      <StatusText>0 items</StatusText>
      <button aria-label="Details view"><DetailsIcon /></button>
      <button aria-label="Large icons view"><PictureIcon w={14} h={14} /></button>
    </Status>
  </Frame>
);

export default function App() {
  return (
    <Screen>
      <GlobalStyle />
      <Workspace>
        <ShortcutColumn>
          {shortcuts.map((s) => (
            <li key={s.label}>
              <Shortcut>{s.icon}<ShortcutLabel>{s.label}</ShortcutLabel></Shortcut>
            </li>
          ))}
        </ShortcutColumn>
        <ShortcutColumn>
          <li><Shortcut><Firefox w={32} id="fox-desktop" /><ShortcutLabel>Mozilla Firefox</ShortcutLabel></Shortcut></li>
        </ShortcutColumn>
        <CdWindow />
        <DocumentsWindow />
      </Workspace>
      <BarWrap>
        <Taskbar>
          <Start aria-label="Start"><WinLogo /></Start>
          <TaskSearch>
            <Lens size={17} color="#eef3f7" width={1.3} />
            <TaskSearchInput placeholder="Type here to search" />
          </TaskSearch>
          <Pins>
            <TaskViewButton aria-label="Task View"><TaskView /></TaskViewButton>
            <Pin aria-label="Command Prompt"><Cmd w={24} /></Pin>
            <Pin $hot aria-label="Google Chrome"><Chrome w={24} /></Pin>
            <Pin $running aria-label="Mozilla Firefox"><Firefox w={24} id="fox-bar" /></Pin>
            <Pin aria-label="Notepad"><Notebook /></Pin>
            <Pin aria-label="Notepad++"><NotepadPlus /></Pin>
            <Pin aria-label="Snipping Tool"><Snip /></Pin>
          </Pins>
          <Task><TaskIcon><CdTask /></TaskIcon>CD Driv...</Task>
          <Task $active><TaskIcon><TaskDocIcon /></TaskIcon>Docum...</Task>
          <Tray>
            <TrayIcons><Network /><Rainbow /><Muted /></TrayIcons>
            <Clock>2:21 PM<br />5/27/2023</Clock>
          </Tray>
        </Taskbar>
        <Pointer><CursorIcon /></Pointer>
      </BarWrap>
    </Screen>
  );
}
